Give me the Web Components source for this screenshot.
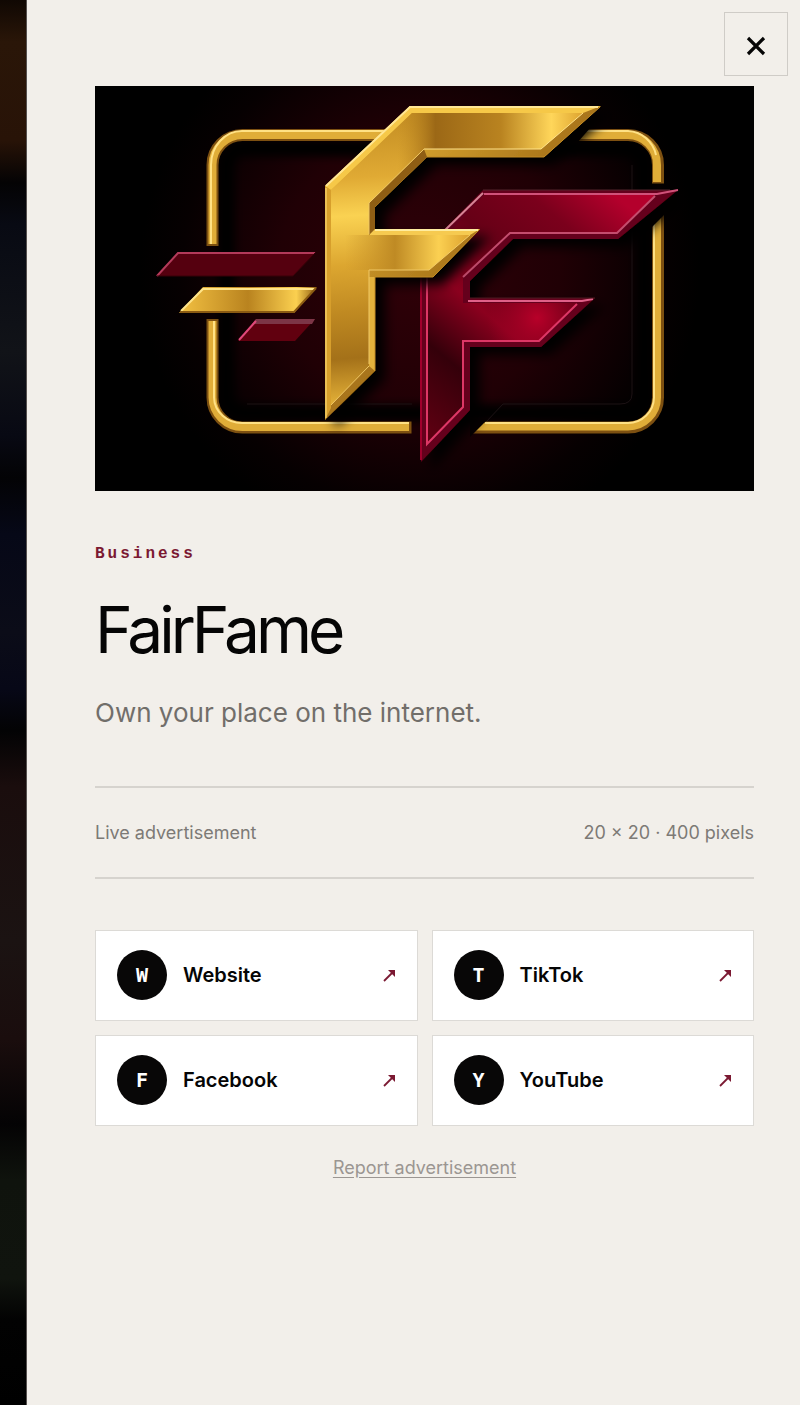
<!DOCTYPE html>
<html lang="en">
<head>
<meta charset="utf-8">
<meta name="viewport" content="width=device-width, initial-scale=1">
<title>FairFame</title>
<style>
  body {
    margin: 0;
    background: #000;
    font-family: Inter, "Liberation Sans", sans-serif;
    color: #050505;
  }
</style>
</head>
<body>
<ad-drawer>
  <close-button slot="close"></close-button>
  <brand-art></brand-art>
  <ad-heading category="Business" name="FairFame">Own your place on the internet.</ad-heading>
  <ad-meta>
    <span>Live advertisement</span>
    <span slot="size">20 × 20 · 400 pixels</span>
  </ad-meta>
  <link-grid>
    <link-card letter="W">Website</link-card>
    <link-card letter="T">TikTok</link-card>
    <link-card letter="F">Facebook</link-card>
    <link-card letter="Y">YouTube</link-card>
  </link-grid>
  <report-link>Report advertisement</report-link>
</ad-drawer>

<script>
class AdDrawer extends HTMLElement {
  constructor() {
    super();
    this.attachShadow({ mode: 'open' });
    this.shadowRoot.innerHTML = `
      <style>
        :host {
          display: flex;
          min-height: 100vh;
        }
        .wall {
          flex: 0 0 26px;
          border-right: 1px solid #55504e;
          background: linear-gradient(
            #100803 0, #2a1608 3%, #281307 10%, #040304 13%,
            #080a13 16%, #111318 25%, #080913 31%, #030305 34%,
            #060817 38%, #0b0c18 45%, #070817 49%, #030304 52%,
            #1a0d0d 56%, #1b1312 67%, #1a0d0d 74%, #040304 80%,
            #0f130d 84%, #10140e 91%, #020202 94%, #000 100%);
        }
        section {
          flex: 1;
          min-width: 0;
          background: #f2efea;
        }
        header {
          display: flex;
          justify-content: flex-end;
          padding: 12px 12px 10px;
        }
        .content {
          display: flex;
          flex-direction: column;
          padding: 0 46px 68px 68px;
        }
      </style>
      <div class="wall"></div>
      <section>
        <header><slot name="close"></slot></header>
        <div class="content"><slot></slot></div>
      </section>
    `;
  }
}

class CloseButton extends HTMLElement {
  constructor() {
    super();
    this.attachShadow({ mode: 'open' });
    this.shadowRoot.innerHTML = `
      <style>
        :host { display: block; }
        button {
          display: flex;
          align-items: center;
          justify-content: center;
          box-sizing: border-box;
          width: 64px;
          height: 64px;
          padding: 4px 0 0;
          border: 1px solid #cfccc7;
          background: none;
          cursor: pointer;
        }
      </style>
      <button aria-label="Close">
        <svg width="20" height="20" viewBox="0 0 20 20" fill="none" stroke="#050505" stroke-width="3.200">
          <path d="M2 2 18 18M18 2 2 18"/>
        </svg>
      </button>
    `;
  }
}

class BrandArt extends HTMLElement {
  constructor() {
    super();
    this.attachShadow({ mode: 'open' });
    this.shadowRoot.innerHTML = `
      <style>
        :host { display: block; }
        svg { display: block; width: 100%; height: auto; }
      </style>
      <svg viewBox="95 86 659 405" role="img" aria-label="FairFame logo">
        <defs>
          <radialGradient id="glow" gradientUnits="userSpaceOnUse" cx="420" cy="270" r="280">
            <stop offset="0" stop-color="#300008"/>
            <stop offset=".5" stop-color="#200005"/>
            <stop offset=".85" stop-color="#060001"/>
            <stop offset="1" stop-color="#000"/>
          </radialGradient>
          <linearGradient id="gold" gradientUnits="userSpaceOnUse" x1="345" y1="120" x2="362" y2="410">
            <stop offset="0" stop-color="#c58f24"/>
            <stop offset=".2" stop-color="#e0aa34"/>
            <stop offset=".33" stop-color="#fad252"/>
            <stop offset=".5" stop-color="#dca630"/>
            <stop offset=".66" stop-color="#c08a22"/>
            <stop offset=".82" stop-color="#a47119"/>
            <stop offset="1" stop-color="#edba3c"/>
          </linearGradient>
          <linearGradient id="goldTop" gradientUnits="userSpaceOnUse" x1="398" y1="0" x2="585" y2="0">
            <stop offset="0" stop-color="#c08a22" stop-opacity="0"/>
            <stop offset=".2" stop-color="#9c6816"/>
            <stop offset=".55" stop-color="#b98320"/>
            <stop offset=".82" stop-color="#ffd65a"/>
            <stop offset="1" stop-color="#dba02c"/>
          </linearGradient>
          <linearGradient id="goldArm" gradientUnits="userSpaceOnUse" x1="345" y1="0" x2="470" y2="0">
            <stop offset="0" stop-color="#c9942a" stop-opacity="0"/>
            <stop offset=".4" stop-color="#bf8a24"/>
            <stop offset=".75" stop-color="#fbd052"/>
            <stop offset="1" stop-color="#dba02c"/>
          </linearGradient>
          <linearGradient id="bevel" x1="0" y1="0" x2="1" y2="1">
            <stop offset="0" stop-color="#f8c63e"/>
            <stop offset=".5" stop-color="#a8741a"/>
            <stop offset="1" stop-color="#7a4b0c"/>
          </linearGradient>
          <linearGradient id="bar" x1="0" y1="0" x2="1" y2="0">
            <stop offset="0" stop-color="#f3c142"/>
            <stop offset=".5" stop-color="#b9831f"/>
            <stop offset=".85" stop-color="#fbd050"/>
            <stop offset="1" stop-color="#8e5c12"/>
          </linearGradient>
          <linearGradient id="red" gradientUnits="userSpaceOnUse" x1="430" y1="430" x2="620" y2="200">
            <stop offset="0" stop-color="#5b0011"/>
            <stop offset=".22" stop-color="#34000a"/>
            <stop offset=".42" stop-color="#8b001e"/>
            <stop offset=".62" stop-color="#660016"/>
            <stop offset=".82" stop-color="#7b001c"/>
            <stop offset="1" stop-color="#b4002c"/>
          </linearGradient>
          <radialGradient id="hot" gradientUnits="userSpaceOnUse" cx="537" cy="318" r="50">
            <stop offset="0" stop-color="#b80029"/>
            <stop offset="1" stop-color="#9c0023" stop-opacity="0"/>
          </radialGradient>
          <filter id="cast" x="-20%" y="-20%" width="150%" height="150%">
            <feDropShadow dx="10" dy="8" stdDeviation="6" flood-color="#000"/>
          </filter>
          <filter id="soft"><feGaussianBlur stdDeviation="4"/></filter>
        </defs>
        <rect x="95" y="86" width="659" height="405" fill="#000"/>
        <rect x="95" y="86" width="659" height="405" fill="url(#glow)"/>

        <!-- recess inside the frame -->
        <rect x="226" y="148" width="418" height="265" rx="18" fill="none" stroke="#000" stroke-width="17" filter="url(#soft)"/>
        <path d="M247 404H412M486 422 503 404H620Q632 404 632 394V165" fill="none" stroke="#1c1214"/>

        <!-- frame: dark rim, gold tube, highlight -->
        <g fill="none">
          <g stroke="#7d5011" stroke-width="12">
            <path d="M212.500 246V165A30 30 0 0 1 242.500 135H400"/>
            <path d="M212.500 319V397.500A30 30 0 0 0 242.500 427.500H411.500"/>
            <path d="M576 135H628A30 30 0 0 1 658 165V183.500"/>
            <path d="M658 214V397.500A30 30 0 0 1 628 427.500H472"/>
          </g>
          <g stroke="#e0ad38" stroke-width="8">
            <path d="M212.500 244V165A30 30 0 0 1 242.500 135H400"/>
            <path d="M212.500 321V397.500A30 30 0 0 0 242.500 427H409"/>
            <path d="M576 135H628A29 30 0 0 1 657 165V182"/>
            <path d="M657 214V397.500A29 29 0 0 1 628 426.500H474"/>
          </g>
          <g stroke="#ffe184" stroke-width="2">
            <path d="M211 244V165A31 34 0 0 1 242.500 131H395"/>
            <path d="M214 321V397.500A28 26 0 0 0 242.500 423H409"/>
            <path d="M586 131H628A30 30 0 0 1 656 155"/>
            <path d="M654 222V397.500A26 26 0 0 1 628 423H485"/>
          </g>
        </g>
        <path d="M570 143H577L591 127H570ZM650 229 667 212H650ZM470 437 488 419H470Z" fill="#060001"/>

        <!-- speed lines -->
        <path d="M178 252H316L293 276H156Z" fill="#55000f"/>
        <path d="M157 276 178 253H315" fill="none" stroke="#b33a5a" stroke-width="2"/>
        <path d="M157 276H293L315 253" fill="none" stroke="#380009"/>
        <path d="M203 287H317L294 313H179Z" fill="url(#bar)"/>
        <path d="M181 311 203 289H315" fill="none" stroke="#ffe48a" stroke-width="2"/>
        <path d="M180 312H294L316 288" fill="none" stroke="#8a5a12" stroke-width="2"/>
        <path d="M256 319H315L295 341H238Z" fill="#61000f"/>
        <path d="M256 319H315L312 324H252Z" fill="#7c3546"/>
        <path d="M239 340 256 321" stroke="#e0487a" stroke-width="2"/>

        <!-- crimson F -->
        <g filter="url(#cast)">
          <path d="M483 190H678L618 239H513L470 281V298H595L541 347H470V410L421 462V253Z" fill="#65001a"/>
        </g>
        <path d="M484 195H655L617 233H510L463 277V303H577L539 341H463V407L427 444V258Z" fill="url(#red)"/>
        <path d="M463 303H577L539 341H463Z" fill="url(#hot)"/>
        <path d="M439 236 483 193" stroke="#d68495" stroke-width="2"/>
        <path d="M483 190H670" stroke="#54252c"/>
        <path d="M484 194H657L678 190" fill="none" stroke="#d0527a" stroke-width="2"/>
        <path d="M655 196 617 233H510L463 277" fill="none" stroke="#c44d6e" stroke-width="2"/>
        <path d="M468 301H582L593 299" fill="none" stroke="#e06088" stroke-width="2"/>
        <path d="M577 304 539 341H463V407L427 444V270" fill="none" stroke="#dd3766" stroke-width="2"/>
        <path d="M470 298H595" stroke="#4a1a20"/>
        <path d="M421 460V270" stroke="#a0002c" stroke-width="2"/>

        <!-- gold F -->
        <g filter="url(#cast)">
          <path d="M410 106H601L544 157H427L375 207V229H480L433 277H375V371L325 420V186Z" fill="url(#bevel)"/>
        </g>
        <path d="M410 106H601L583 113H412L331 190 325 186Z" fill="#f6c848"/>
        <path d="M325 186 331 190V408L325 420Z" fill="#d79f2c"/>
        <path d="M369 229H480L470 235H369Z" fill="#f6ca50"/>
        <path d="M375 277H369V366L375 371Z" fill="#e3b23c"/>
        <path d="M427 157 375 207V229L369 235V203L424 149Z" fill="#8f5e14"/>
        <path d="M412 113H583L541 149H424L369 203V235H470L429 270H369V366L331 405V190Z" fill="url(#gold)"/>
        <path d="M412 113H583L541 149H424L400 172 375 148Z" fill="url(#goldTop)"/>
        <path d="M345 235H470L429 270H345Z" fill="url(#goldArm)"/>
        <path d="M326 186 410 107H598" fill="none" stroke="#ffe694" stroke-width="2"/>
        <path d="M326 188V418" stroke="#ffe07a"/>
        <path d="M331 405 369 366M424 149 369 203V234M369 364V270H429L470 235" fill="none" stroke="#f0c866"/>
        <path d="M583 113 541 149H424" fill="none" stroke="#ffe28a"/>
        <path d="M375 230H478" stroke="#ffec9f" stroke-width="2"/>
        <path d="M427 157H544L600 107M375 277H433L479 230M375 277V371" fill="none" stroke="#c28b24"/>
      </svg>
    `;
  }
}

class AdHeading extends HTMLElement {
  constructor() {
    super();
    this.attachShadow({ mode: 'open' });
    this.shadowRoot.innerHTML = `
      <style>
        :host { display: block; margin-top: 53px; }
        p, h1 { margin: 0; }
        .category {
          font: bold 16px/20px "Liberation Mono", monospace;
          letter-spacing: 3px;
          color: #7b1932;
        }
        h1 {
          margin-top: 34px;
          font-size: 64px;
          line-height: 64px;
          font-weight: 400;
          letter-spacing: -4px;
        }
        .tagline {
          margin-top: 31px;
          font-size: 26px;
          line-height: 40px;
          color: #716e6a;
        }
      </style>
      <p class="category"></p>
      <h1></h1>
      <p class="tagline"><slot></slot></p>
    `;
  }

  connectedCallback() {
    this.shadowRoot.querySelector('.category').textContent = this.getAttribute('category');
    this.shadowRoot.querySelector('h1').textContent = this.getAttribute('name');
  }
}

class AdMeta extends HTMLElement {
  constructor() {
    super();
    this.attachShadow({ mode: 'open' });
    this.shadowRoot.innerHTML = `
      <style>
        :host {
          display: flex;
          justify-content: space-between;
          margin-top: 53px;
          padding: 32px 0;
          border-top: 2px solid #d6d3ce;
          border-bottom: 2px solid #d6d3ce;
          font-size: 18px;
          line-height: 25px;
          color: #7d7a76;
        }
      </style>
      <slot></slot>
      <slot name="size"></slot>
    `;
  }
}

class LinkGrid extends HTMLElement {
  constructor() {
    super();
    this.attachShadow({ mode: 'open' });
    this.shadowRoot.innerHTML = `
      <style>
        :host {
          display: grid;
          grid-template-columns: 1fr 1fr;
          gap: 14px;
          margin-top: 51px;
        }
      </style>
      <slot></slot>
    `;
  }
}

class LinkCard extends HTMLElement {
  constructor() {
    super();
    this.attachShadow({ mode: 'open' });
    this.shadowRoot.innerHTML = `
      <style>
        :host { display: block; }
        a {
          display: flex;
          align-items: center;
          gap: 16px;
          padding: 19px 21px 20px;
          border: 1px solid #dcdad6;
          background: #fff;
          color: inherit;
          font-size: 20px;
          line-height: 24px;
          font-weight: 600;
          text-decoration: none;
        }
        .badge {
          display: flex;
          align-items: center;
          justify-content: center;
          width: 50px;
          height: 50px;
          border-radius: 50%;
          background: #080707;
          color: #fff;
          font: bold 20px/24px "DejaVu Sans Mono", monospace;
        }
        .label { flex: 1; }
      </style>
      <a href="#">
        <span class="badge"></span>
        <span class="label"><slot></slot></span>
        <svg width="13" height="13" viewBox="0 0 13 13" aria-hidden="true">
          <path d="M1 12 9 4" stroke="#7b1932" stroke-width="1.800"/>
          <path d="M5 1H12V8L10 6 7 3Z" fill="#7b1932"/>
        </svg>
      </a>
    `;
  }

  connectedCallback() {
    this.shadowRoot.querySelector('.badge').textContent = this.getAttribute('letter');
  }
}

class ReportLink extends HTMLElement {
  constructor() {
    super();
    this.attachShadow({ mode: 'open' });
    this.shadowRoot.innerHTML = `
      <style>
        :host {
          display: block;
          margin-top: 29px;
          text-align: center;
          font-size: 18px;
          line-height: 25px;
        }
        a {
          color: #9b9692;
          text-underline-offset: 3px;
        }
      </style>
      <a href="#"><slot></slot></a>
    `;
  }
}

customElements.define('ad-drawer', AdDrawer);
customElements.define('close-button', CloseButton);
customElements.define('brand-art', BrandArt);
customElements.define('ad-heading', AdHeading);
customElements.define('ad-meta', AdMeta);
customElements.define('link-grid', LinkGrid);
customElements.define('link-card', LinkCard);
customElements.define('report-link', ReportLink);
</script>
</body>
</html>
